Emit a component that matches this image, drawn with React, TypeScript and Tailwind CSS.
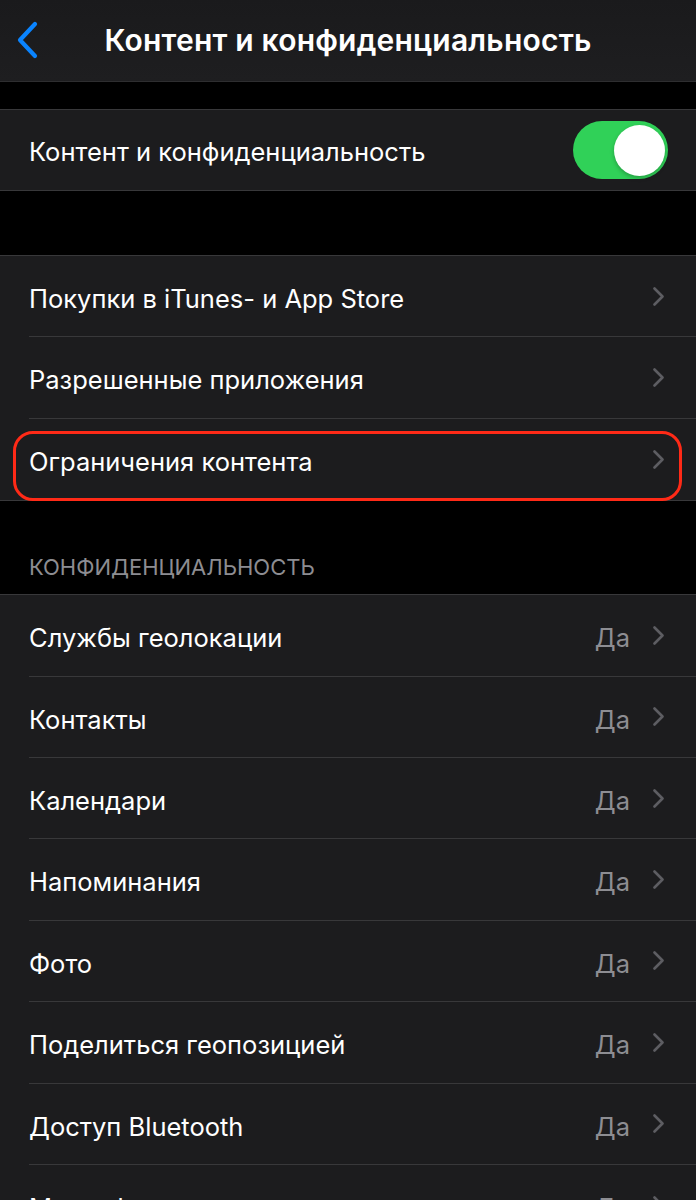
import React from "react";

type Row = {
  label: string;
  value?: string;
  highlighted?: boolean;
};

const contentRows: Row[] = [
  { label: "Покупки в iTunes- и App Store" },
  { label: "Разрешенные приложения" },
  { label: "Ограничения контента", highlighted: true },
];

const privacyRows: Row[] = [
  { label: "Службы геолокации", value: "Да" },
  { label: "Контакты", value: "Да" },
  { label: "Календари", value: "Да" },
  { label: "Напоминания", value: "Да" },
  { label: "Фото", value: "Да" },
  { label: "Поделиться геопозицией", value: "Да" },
  { label: "Доступ Bluetooth", value: "Да" },
  { label: "Микрофон", value: "Да" },
];

function Chevron() {
  return (
    <svg width="13" height="19" viewBox="0 0 13 19" className="shrink-0 -translate-y-[3px]">
      <path
        d="M2.5 1.5 L10.5 9.5 L2.5 17.5"
        fill="none"
        stroke="#5d5d62"
        strokeWidth="2.6"
        strokeLinecap="round"
        strokeLinejoin="round"
      />
    </svg>
  );
}

function ListRow({ row, last }: { row: Row; last: boolean }) {
  return (
    <div className="relative h-[81.4px] pl-[29px]">
      <div
        className={
          "flex h-full items-center pt-[6px] pr-[31px] " +
          (last ? "" : "border-b border-[#38383a]")
        }
      >
        <span className="flex-1 text-[25.5px] text-white">{row.label}</span>
        {row.value && (
          <span className="mr-[22px] text-[25.5px] text-[#8d8d92]">{row.value}</span>
        )}
        <Chevron />
      </div>
      {row.highlighted && (
        <div className="pointer-events-none absolute top-[12px] -bottom-[1px] left-[13px] right-[14px] rounded-[20px] border-[3px] border-[#ff2a17]" />
      )}
    </div>
  );
}

function Group({ rows }: { rows: Row[] }) {
  return (
    <div className="border-y border-[#38383a] bg-[#1c1c1e]">
      {rows.map((row, i) => (
        <ListRow key={row.label} row={row} last={i === rows.length - 1} />
      ))}
    </div>
  );
}

export default function App() {
  return (
    <div
      className="h-[1200px] w-[696px] overflow-hidden bg-black"
      style={{ fontFamily: "Inter, Roboto, 'Noto Sans', sans-serif" }}
    >
      {/* nav bar */}
      <div className="relative flex h-[82px] items-center justify-center border-b border-[#2e2e30] bg-gradient-to-b from-[#1a1a1c] to-[#1e1e20]">
        <svg
          width="26"
          height="38"
          viewBox="0 0 26 38"
          className="absolute left-[15px] top-[21px]"
        >
          <path
            d="M20 3 L5 19 L20 35"
            fill="none"
            stroke="#0a84ff"
            strokeWidth="4.2"
            strokeLinecap="round"
            strokeLinejoin="round"
          />
        </svg>
        <h1 className="text-[30px] font-semibold tracking-[0.2px] text-white">Контент и конфиденциальность</h1>
      </div>

      <div className="h-[27px]" />

      {/* toggle row */}
      <div className="border-y border-[#38383a] bg-[#1c1c1e]">
        <div className="flex h-[80px] items-center pl-[29px] pr-[28px]">
          <span className="flex-1 pt-[5px] text-[25.5px] text-white">Контент и конфиденциальность</span>
          <div className="flex h-[58px] w-[95px] items-center justify-end rounded-full bg-[#30d158] pr-[3px]">
            <div className="h-[51px] w-[51px] rounded-full bg-white shadow-[0_2px_4px_rgba(0,0,0,0.25)]" />
          </div>
        </div>
      </div>

      <div className="h-[64px]" />

      <Group rows={contentRows} />

      <div className="flex h-[93px] items-end pb-[10px] pl-[29px]">
        <span className="text-[22px] uppercase text-[#8d8d92]">
          Конфиденциальность
        </span>
      </div>

      <Group rows={privacyRows} />
    </div>
  );
}
